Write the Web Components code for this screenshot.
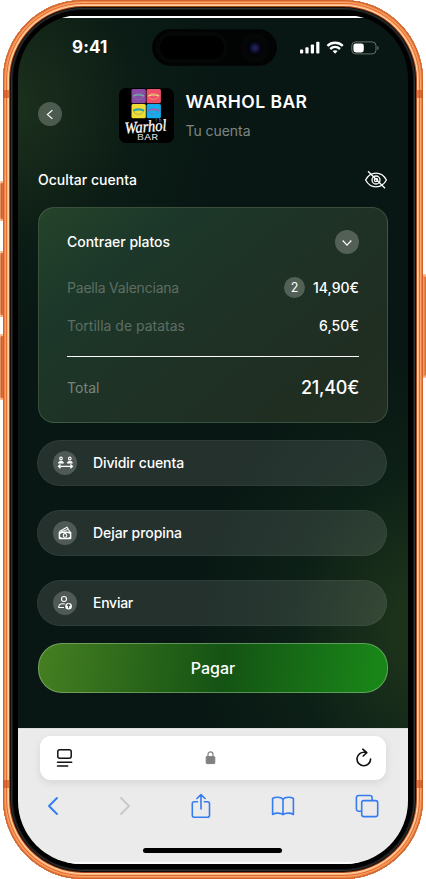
<!DOCTYPE html>
<html lang="es">
<head>
<meta charset="utf-8">
<title>Warhol Bar</title>
<style>
html,body{margin:0;background:#fff;font-family:Inter,"Liberation Sans",sans-serif;color:#fff}
body{width:426px;height:879px;overflow:hidden}
</style>
</head>
<body>
<phone-frame>
  <status-bar></status-bar>
  <venue-header></venue-header>
  <hide-row></hide-row>
  <bill-card>
    <bill-row name="Paella Valenciana" nw="112" count="2" price="14,90€" pw="46" style="height:40px"></bill-row>
    <bill-row name="Tortilla de patatas" nw="118" price="6,50€" pw="40" style="height:36px"></bill-row>
  </bill-card>
  <action-list>
    <action-pill label="Dividir cuenta" w="91"><svg viewBox="0 0 24 24" width="24" height="24" fill="none" stroke="#fff" stroke-width="1.1"><circle cx="8" cy="7.4" r="1.3"/><circle cx="16.8" cy="7.4" r="1.3"/><path d="M5.4 12.2c0-3 5.2-3 5.2 0zM14.2 12.2c0-3 5.2-3 5.2 0z" fill="#fff" stroke-width=".6"/><path d="M5.6 15.3h13.6M7.5 13.4l-2 1.9 2 1.9M17.4 13.4l2 1.9-2 1.9" stroke-width="1.3"/></svg></action-pill>
    <action-pill label="Dejar propina" w="89"><svg viewBox="0 0 24 24" width="24" height="24" fill="none" stroke="#fff" stroke-width="1.1"><rect x="6.4" y="11.2" width="11.2" height="6.4" rx=".4" stroke-width="1.5"/><circle cx="12" cy="14.4" r="1.8"/><path d="M6.4 10.6l7.6-4.3 1.3 2M8.5 10.8l6.7-2.5 1.6 2.3"/><path d="M7 12.3h1.5M15.5 12.3H17M7 16.6h1.5M15.5 16.6H17"/></svg></action-pill>
    <action-pill label="Enviar" w="40"><svg viewBox="0 0 24 24" width="24" height="24" fill="none" stroke="#fff" stroke-width="1.1"><circle cx="11" cy="8" r="2.5"/><path d="M11 16.5H5.8v-.9c0-2.6 3.3-3.4 6-2.6"/><circle cx="15.6" cy="15.2" r="3.3" fill="#fff" stroke="none"/><path d="M15.6 17.2v-3.6M14.1 14.7l1.5-1.4 1.5 1.4" stroke="#46524d"/></svg></action-pill>
  </action-list>
  <pay-button><fit-text w="44">Pagar</fit-text></pay-button>
  <safari-bar></safari-bar>
</phone-frame>

<script>
const define = (name, html, after) => customElements.define(name, class extends HTMLElement {
  connectedCallback() {
    if (this.shadowRoot) return;
    const root = this.attachShadow({ mode: 'open' });
    root.innerHTML = typeof html === 'function' ? html(this) : html;
    if (after) after(this, root);
  }
});

/* One line of text whose tracking is set so that it fills the given width. */
define('fit-text', `<style>:host{display:inline-block;white-space:nowrap;line-height:20px}span{display:inline-block}</style><span><slot></slot></span>`,
  (el, root) => {
    const span = root.querySelector('span');
    const n = el.textContent.length;
    const gap = (parseFloat(el.getAttribute('w')) - span.getBoundingClientRect().width) / n;
    span.style.letterSpacing = gap.toFixed(3) + 'px';
  });

define('round-badge', `<style>:host{display:flex;align-items:center;justify-content:center;flex:none;width:24px;height:24px;border-radius:50%;background:rgba(255,255,255,.23)}</style><slot></slot>`);

define('phone-frame', `
<style>
:host{display:block;position:relative;box-sizing:border-box;width:426px;height:879px;padding:15px 18px 15px}
.shell{position:absolute;inset:0 3px 0;border-radius:80px;background:#000;box-shadow:
 inset 0 0 0 1px #d0612a,inset 0 0 0 2px #ee8546,inset 0 0 0 3px #fba468,inset 0 0 0 4px #e06b33,
 inset 0 0 0 5px #ffb67c,inset 0 0 0 6px #ffd3a0,inset 0 0 0 7px #a8431a,inset 0 0 0 8px #160d09,inset 0 0 0 9px #2c3133,inset 0 0 0 10px #15191a}
.btn{position:absolute;width:4px;background:linear-gradient(90deg,#f2a173,#cf5e2b 40%,#e98452);border-radius:2px 0 0 2px;box-shadow:inset 0 2px #ffbd90,inset 0 -2px #ffb484}
.r{border-radius:0 2px 2px 0;background:linear-gradient(90deg,#ffbd90,#d96028)}
.band{position:absolute;width:6px;height:8px;background:#c8501d;opacity:.65}
.screen{position:relative;box-sizing:border-box;height:849px;width:390px;border-radius:63px;overflow:hidden;display:flex;flex-direction:column;padding-top:3px;
 background:
 linear-gradient(#000 0 1px,#fff 1px 3px,transparent 3px),
 radial-gradient(ellipse 215px 235px at -8px 90px,#1c311e 0,rgba(25,44,27,.82) 25%,rgba(15,33,24,.42) 62%,transparent 100%),
 radial-gradient(ellipse 240px 280px at 415px 615px,#1f381c 0,rgba(29,51,27,.88) 22%,rgba(18,42,27,.46) 58%,transparent 100%),
 #081713}
</style>
<div class="btn" style="left:0;top:181px;height:40px"></div>
<div class="btn" style="left:0;top:251px;height:66px"></div>
<div class="btn" style="left:0;top:334px;height:66px"></div>
<div class="btn r" style="right:0;top:274px;height:104px"></div>
<div class="shell"></div>
<div class="band" style="left:3px;top:90px"></div><div class="band" style="right:3px;top:90px"></div>
<div class="band" style="left:3px;top:780px"></div><div class="band" style="right:3px;top:780px"></div>
<div class="screen"><slot></slot></div>`);

define('status-bar', `
<style>
:host{display:grid;grid-template-columns:134px 125px 1fr;height:59px;flex:none;align-items:center}
.t{font-size:17px;font-weight:650;padding-left:54px;margin-top:-1px}
.island{box-sizing:border-box;height:37px;border-radius:19px;background:#020303;display:flex;align-items:center;justify-content:space-between;padding:0 7px;border:1px solid #050707}
.pill{width:64px;height:23px;border-radius:12px;background:#000;box-shadow:0 0 0 4px #050606}
.cam{width:28px;height:28px;border-radius:50%;background:radial-gradient(circle,#142c4a 0 1px,#1d1248 3px,#070a20 5px,#030407 6px,#050608 12px)}
.i{display:flex;padding-left:23px;align-items:center}
</style>
<div class="t"><fit-text w="35.5">9:41</fit-text></div>
<div class="island"><div class="pill"></div><div class="cam"></div></div>
<div class="i"><svg width="80" height="14" viewBox="0 0 80 14" fill="#fff"><rect x="0" y="8.5" width="3.2" height="4" rx=".9"/><rect x="5.4" y="6.3" width="3.2" height="6.2" rx=".9"/><rect x="10.8" y="3.4" width="3.2" height="9.1" rx=".9"/><rect x="16.2" y=".7" width="3.2" height="11.8" rx=".9"/>
<g fill="none" stroke="#fff" stroke-width="2.4"><path d="M27.4 4.8c4.3-4.1 11.1-4.1 15.4 0"/><path d="M30.2 8c2.9-2.7 6.9-2.7 9.8 0"/></g><path d="M35.1 12.7l-2.5-2.6c1.4-1.3 3.6-1.3 5 0z"/>
<rect x="51.8" y=".9" width="24.2" height="12" rx="3.8" fill="none" stroke="#fff" stroke-opacity=".38"/><rect x="53.4" y="2.4" width="10.4" height="9" rx="2.4"/><path d="M77.3 5v4c1.7-.7 1.7-3.3 0-4z" opacity=".45"/></svg></div>`);

define('venue-header', `
<style>
:host{display:flex;flex:none;align-items:center;height:75px;padding-left:20px}
.logo{width:55px;height:55px;margin:2px 12px 0 56.5px}
.txt{display:flex;flex-direction:column;gap:9px;padding-top:3px}
.a{font-size:17.5px;font-weight:600;line-height:20px}.b{font-size:14px;color:#7d8784}
svg{display:block}
round-badge{margin-top:-1px}
</style>
<round-badge><svg width="24" height="24" fill="none" stroke="#fff" stroke-width="1.2"><path d="M14.4 8.1l-5 4.4 5 4.4"/></svg></round-badge>
<div class="logo"><svg width="55" height="55" viewBox="0 0 55 55"><rect width="55" height="55" rx="7" fill="#000"/>
<rect x="12.5" y="1" width="14.3" height="14.2" rx="1.5" fill="#8b4ba5"/><rect x="27.6" y="1" width="14.3" height="14.2" rx="1.5" fill="#ef4f69"/><rect x="12.5" y="16" width="14.3" height="14.2" rx="1.5" fill="#f1dc35"/><rect x="27.6" y="16" width="14.3" height="14.2" rx="1.5" fill="#14adeb"/>
<g stroke-width=".7" fill="none"><path d="M14.1 7.7q4-3 5.4-1.8 1.7-1 5.7 1.6-2 4.3-5.8 4-3.8 0-5.3-3.8z" stroke="#7d7fa5"/><path d="M14.5 7.8q5-2 10.4 0" stroke="#65b8a4" stroke-width="1.3"/>
<path d="M29.1 7.7q4-3 5.4-1.8 1.7-1 5.7 1.6-2 4.3-5.8 4-3.8 0-5.3-3.8z" stroke="#f0a06a"/><path d="M29.5 7.8q5-2 10.4 0" stroke="#e9d27c" stroke-width="1.3"/>
<path d="M14.1 22.7q4-3 5.4-1.8 1.7-1 5.7 1.6-2 4.3-5.8 4-3.8 0-5.3-3.8z" stroke="#8dab5a"/><path d="M14.5 22.5q5-2 10.4 0" stroke="#25a5b5" stroke-width="2"/>
<path d="M29.1 22.7q4-3 5.4-1.8 1.7-1 5.7 1.6-2 4.3-5.8 4-3.8 0-5.3-3.8z" stroke="#7a70b5"/><path d="M29.5 22.5q5-2 10.4 0" stroke="#a35f9f" stroke-width="1.6"/></g>
<text x="36.5" y="34.2" font-size="4.5" fill="#999" textLength="10.5">the</text>
<text transform="translate(6 45.5) rotate(-4)" font-family="Liberation Serif,serif" font-style="italic" font-size="16.5" fill="#fff" stroke="#fff" stroke-width=".3" textLength="42" lengthAdjust="spacingAndGlyphs">Warhol</text>
<text x="18" y="52" font-size="7.6" fill="#ddd" textLength="21" lengthAdjust="spacingAndGlyphs">BAR</text></svg></div>
<div class="txt"><fit-text class="a" w="122">WARHOL BAR</fit-text><fit-text class="b" w="65">Tu cuenta</fit-text></div>`);

define('hide-row', `
<style>:host{display:flex;flex:none;justify-content:space-between;align-items:center;height:55px;padding:0 20px;font-size:14px;font-weight:500}svg{display:block}fit-text{margin-top:1px}</style>
<fit-text w="99">Ocultar cuenta</fit-text>
<svg width="24" height="20" viewBox="0 0 24 20" fill="none" stroke="#fff" stroke-width="1.3"><path d="M1.6 10C6.5.9 17.5.9 22.4 10c-4.9 9.1-15.9 9.1-20.8 0z"/><circle cx="12" cy="10" r="4"/><circle cx="12" cy="10" r="1.6"/><path d="M4 1.3l17 17"/></svg>`);

define('bill-card', `
<style>
:host{display:block;box-sizing:border-box;flex:none;height:216px;margin:0 20px;padding:14px 28px 0;border-radius:16px;border:1px solid rgba(124,160,124,.28);
background:linear-gradient(140deg,#25432a 0,#1c382a 23%,#1e3225 50%,#202e22 80%,#222f22 100%)}
.h,.f{display:flex;justify-content:space-between;align-items:center;height:40px}
.h{font-size:14px;font-weight:500;margin-bottom:6px}
.line{height:1px;background:#fff;margin-top:12px}
.f{height:62px}.n{font-size:14px;color:#7b867d}.p{font-size:18px;font-weight:500}
</style>
<div class="h"><fit-text w="103">Contraer platos</fit-text><round-badge><svg width="24" height="24" fill="none" stroke="#fff" stroke-width="1.2"><path d="M7.7 10.5l4.3 4.7 4.3-4.7"/></svg></round-badge></div>
<slot></slot><div class="line"></div>
<div class="f"><fit-text class="n" w="32.5">Total</fit-text><fit-text class="p" w="58">21,40€</fit-text></div>`);

define('bill-row', el => `
<style>
:host{display:flex;align-items:center;justify-content:space-between;font-size:14px}
.n{color:#5e6e62}.r{display:flex;align-items:center;gap:8px;font-weight:500}
round-badge{width:21px;height:21px;font-size:12.5px;font-weight:400;line-height:19px;margin-top:-1px}
</style>
<fit-text class="n" w="${el.getAttribute('nw')}">${el.getAttribute('name')}</fit-text>
<div class="r">${el.hasAttribute('count') ? `<round-badge>${el.getAttribute('count')}</round-badge>` : ''}<fit-text w="${el.getAttribute('pw')}">${el.getAttribute('price')}</fit-text></div>`);

define('action-list', `<style>:host{display:flex;flex:none;flex-direction:column;gap:24px;padding:17px 21px 17px 19px}</style><slot></slot>`);

define('action-pill', el => `
<style>:host{display:flex;align-items:center;box-sizing:border-box;height:46px;border-radius:23px;padding-left:15px;gap:16px;font-size:14px;font-weight:500;background:rgba(255,255,255,.115);border:1px solid rgba(255,255,255,.05)}
round-badge{background:rgba(255,255,255,.2)}</style>
<round-badge><slot></slot></round-badge><fit-text w="${el.getAttribute('w')}">${el.getAttribute('label')}</fit-text>`);

define('pay-button', `<style>:host{display:flex;flex:none;align-items:center;justify-content:center;box-sizing:border-box;height:50px;margin:0 20px 35px;border-radius:24px;font-size:16px;font-weight:500;border:1px solid rgba(150,195,140,.55);background:linear-gradient(98deg,#467f21 0,#145314 53%,#198518 96%) border-box}::slotted(*){margin-top:-1px}</style><slot></slot>`);

define('safari-bar', `
<style>
:host{display:block;flex:1;background:linear-gradient(transparent 134px,#f9fbfa 134px) #ebebeb;padding:8px 22px 0;box-shadow:inset 0 1px #dcdedd}
.url{display:flex;align-items:center;justify-content:space-between;box-sizing:border-box;height:44px;border-radius:11px;background:#fff;padding:0 13px 0 16px;box-shadow:0 3px 10px rgba(0,0,0,.09)}
.tools{display:flex;justify-content:space-between;align-items:center;height:52px;padding:0 7px 0 7px}
.lock{margin-right:7px}
.home{width:139px;height:5px;border-radius:3px;background:#000;margin:16px auto 0;position:relative;left:-.5px}
svg{display:block;fill:none;stroke-linecap:round;stroke-linejoin:round}
</style>
<div class="url">
<svg width="18" height="20" stroke="#111" stroke-width="1.5"><rect x="1.8" y="1.8" width="13.4" height="8.4" rx="2"/><path d="M1.5 14.3h14.2M1.5 18.1h10.2"/></svg>
<svg class="lock" width="12" height="16" stroke="#808080"><rect x="1.2" y="6.6" width="8.6" height="7" rx=".8" fill="#808080"/><path d="M3 6V4.4c0-3.5 5-3.5 5 0V6" stroke-width="1.2"/></svg>
<svg width="18" height="20" stroke="#111" stroke-width="1.6"><path d="M10 4.3A6.8 6.8 0 1 0 15.6 11M7.8 1.2l4 3.4-3.6 3.4"/></svg>
</div>
<div class="tools">
<svg width="12" height="20" stroke="#347cf0" stroke-width="1.9"><path d="M10 2L2 10l8 8"/></svg>
<svg width="12" height="20" stroke="#c9c9ca" stroke-width="1.9"><path d="M2 2l8 8-8 8"/></svg>
<svg width="20" height="26" stroke="#347cf0" stroke-width="1.6"><path d="M6.5 8.7H3.3A2 2 0 0 0 1.3 10.7v11.5a2 2 0 0 0 2 2h13.2a2 2 0 0 0 2-2V10.7a2 2 0 0 0-2-2h-3.2M10 16V1.8M5.9 5.5L10 1.6l4.1 3.9"/></svg>
<svg width="24" height="20" stroke="#347cf0" stroke-width="1.6"><path d="M12 3.1C9.5.7 4.3.7 1.6 2.5v16c2.7-1.8 7.9-1.8 10.4.1 2.5-1.9 7.7-1.9 10.4-.1v-16C19.700.7 14.5.7 12 3.1zM12 3.1v15.5"/></svg>
<svg width="24" height="24" stroke="#347cf0" stroke-width="1.6"><path d="M6.5 17.2H3.6a2.2 2.2 0 0 1-2.2-2.2V3.7a2.2 2.2 0 0 1 2.2-2.2h11.3a2.2 2.2 0 0 1 2.2 2.2v2.7"/><rect x="6.7" y="6.6" width="16" height="16" rx="2.2"/></svg>
</div>
<div class="home"></div>`);
</script>
</body>
</html>
